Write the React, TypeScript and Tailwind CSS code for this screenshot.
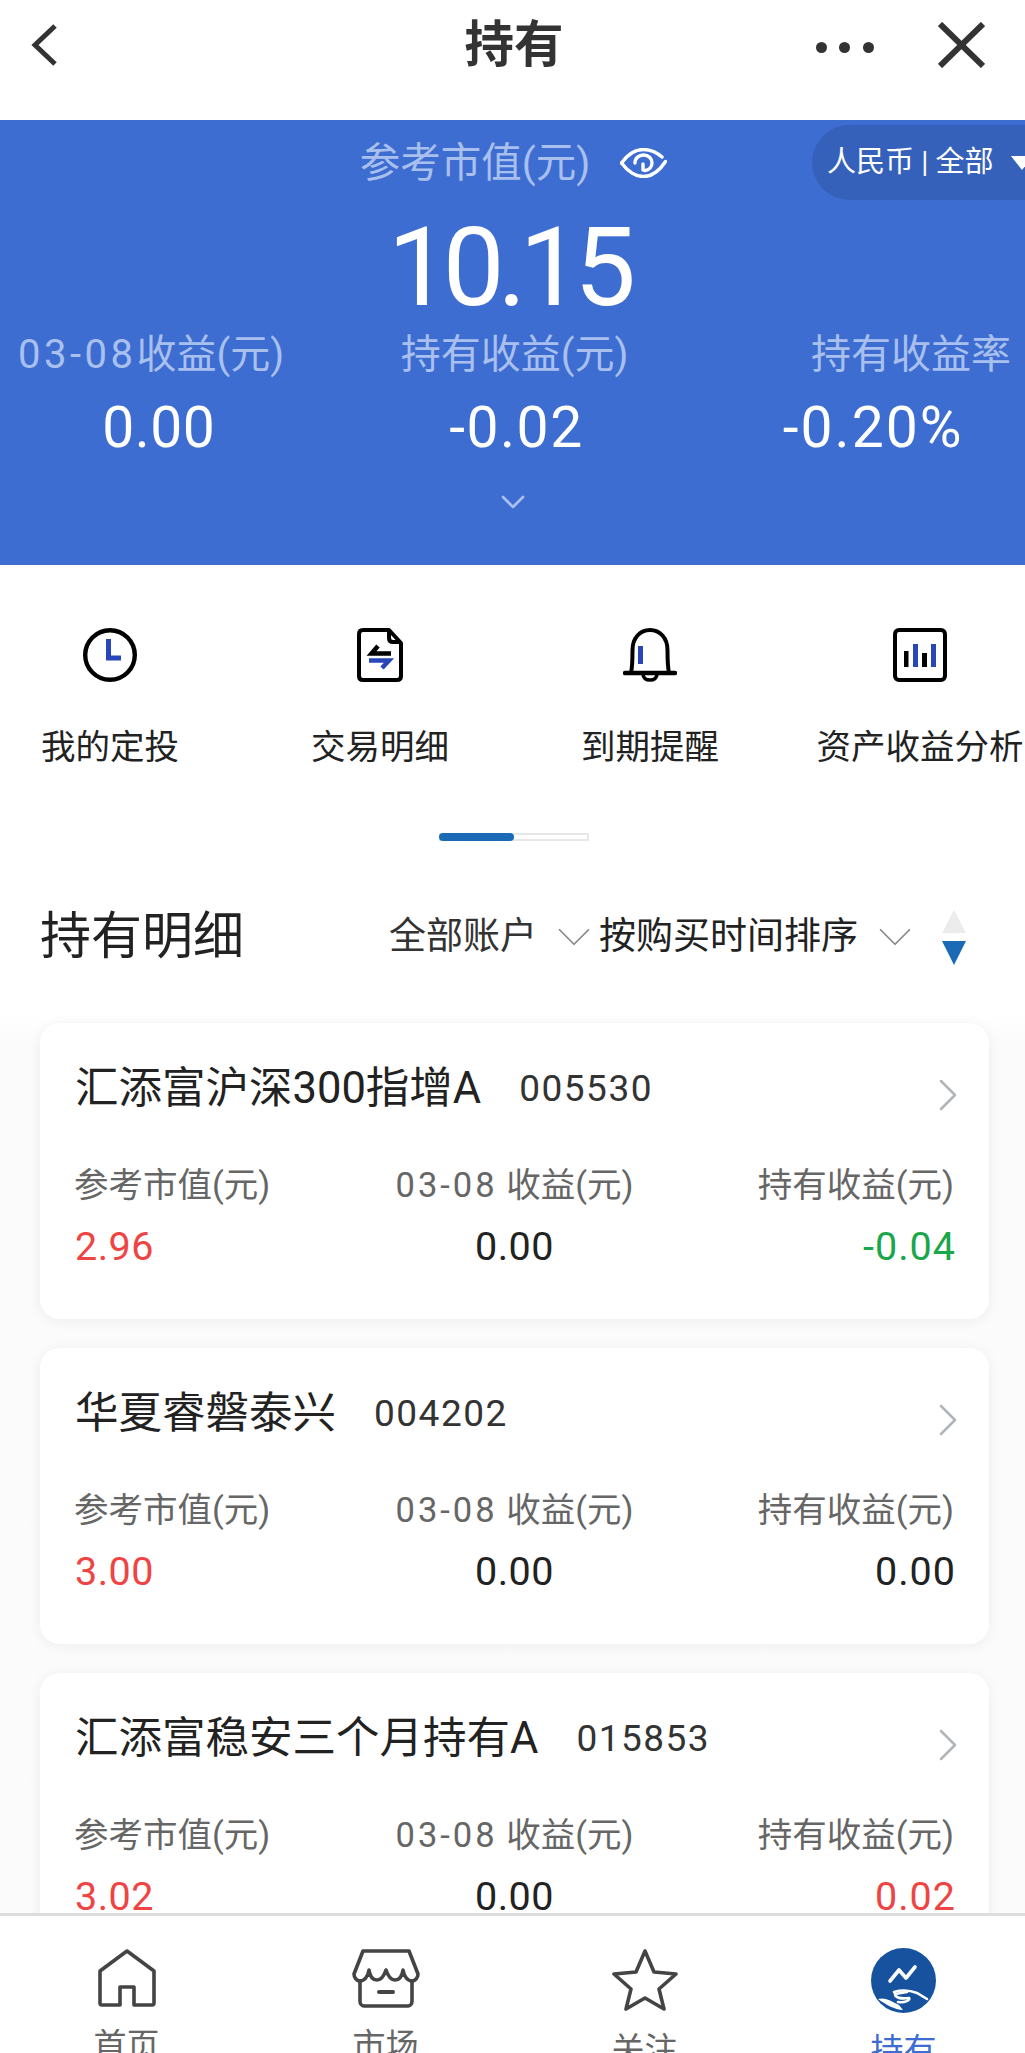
import { ChevronDown, ChevronRight } from "lucide-react";

interface Holding {
  name: string;
  code: string;
  value: string;
  today: string;
  total: string;
  totalColor: string;
}

const HOLDINGS: Holding[] = [
  { name: "汇添富沪深300指增A", code: "005530", value: "2.96", today: "0.00", total: "-0.04", totalColor: "text-[#1aa64a]" },
  { name: "华夏睿磐泰兴", code: "004202", value: "3.00", today: "0.00", total: "0.00", totalColor: "text-[#222222]" },
  { name: "汇添富稳安三个月持有A", code: "015853", value: "3.02", today: "0.00", total: "0.02", totalColor: "text-[#ef4444]" },
];

function EyeIcon() {
  return (
    <svg width="47" height="30" viewBox="0 0 47 30" fill="none" stroke="white" strokeWidth="3.4" strokeLinecap="round">
      <path d="M1.5 15C8 5.5 15 1.5 23.5 1.5C31 1.5 37 4.5 42 9" />
      <path d="M45.5 13.5C39 23.5 32 28.5 23.5 28.5C15 28.5 8 23.5 1.5 15" />
      <path d="M15 15C15 10 19 7 23.5 7C28.5 7 32 10.5 32 15C32 19 29 22 25 22.5" />
      <path d="M23 16V22" />
    </svg>
  );
}

function BackIcon() {
  return (
    <svg width="26" height="42" viewBox="0 0 26 42" fill="none" stroke="#333333" strokeWidth="5">
      <path d="M24 2L4 21L24 40" />
    </svg>
  );
}

function CloseIcon() {
  return (
    <svg width="47" height="46" viewBox="0 0 47 46" fill="none" stroke="#333333" strokeWidth="6">
      <path d="M2 2L45 44" />
      <path d="M45 2L2 44" />
    </svg>
  );
}

function ClockIcon() {
  return (
    <svg width="54" height="54" viewBox="0 0 54 54" fill="none">
      <circle cx="27" cy="27" r="24.8" stroke="black" strokeWidth="4.4" />
      <path d="M25.5 11V30H38" stroke="#2846b8" strokeWidth="5" />
    </svg>
  );
}

function FileIcon() {
  return (
    <svg width="46" height="54" viewBox="0 0 46 54" fill="none">
      <path d="M6 2H32L44 15V48C44 50.5 42.5 52 40 52H6C3.5 52 2 50.5 2 48V6C2 3.5 3.5 2 6 2Z" stroke="black" strokeWidth="4" strokeLinejoin="round" />
      <path d="M32 3V10C32 12.5 33.5 14 36 14H43" stroke="black" strokeWidth="4" />
      <path d="M21 18L14.5 25.5H34" stroke="black" strokeWidth="4.5" />
      <path d="M12 32.5H32L25 40" stroke="#2846b8" strokeWidth="4.5" />
    </svg>
  );
}

function BellIcon() {
  return (
    <svg width="54" height="54" viewBox="0 0 54 54" fill="none">
      <path d="M8 45C9.5 38 9.5 30 9.5 22C9.5 10 17 2 27 2C37 2 44.5 10 44.5 22C44.5 30 44.5 38 46 45" stroke="black" strokeWidth="4" />
      <path d="M2 45H52" stroke="black" strokeWidth="4.4" strokeLinecap="round" />
      <path d="M20 46C20 50 23 52 27 52C31 52 34 50 34 46" stroke="black" strokeWidth="3.6" />
      <rect x="15" y="18" width="5" height="18" fill="#2846b8" />
    </svg>
  );
}

function ChartIcon() {
  return (
    <svg width="54" height="54" viewBox="0 0 54 54" fill="none">
      <rect x="2" y="2" width="50" height="50" rx="4" stroke="black" strokeWidth="4" />
      <rect x="11" y="23" width="4.5" height="16" fill="black" />
      <rect x="20" y="16" width="5" height="23" fill="#2846b8" />
      <rect x="29" y="25" width="5" height="14" fill="black" />
      <rect x="38" y="16" width="5" height="23" fill="#2846b8" />
    </svg>
  );
}

function HomeIcon() {
  return (
    <svg width="60" height="60" viewBox="0 0 60 60" fill="none" stroke="#444444" strokeWidth="3.6" strokeLinejoin="round">
      <path d="M30 3L57 23V55C57 56.5 56 57 55 57H37V39H23V57H5C3.5 57 3 56 3 55V23L30 3Z" />
    </svg>
  );
}

function StoreIcon() {
  return (
    <svg width="68" height="60" viewBox="0 0 68 60" fill="none" stroke="#444444" strokeWidth="3.6" strokeLinejoin="round" strokeLinecap="round">
      <path d="M11 3H57L66 26C66 30 63 33 60 33C56 33 52 29 51 22C50 29 47 32 43 32C39 32 36 28 34 22C32 28 29 32 25 32C21 32 18 29 17 22C16 29 12 33 8 33C5 33 2 30 2 26L11 3Z" />
      <path d="M8 33V53C8 56 10 58 12 58H56C58 58 60 56 60 53V33" />
      <path d="M27 44H41" strokeWidth="4" />
    </svg>
  );
}

function StarIcon() {
  return (
    <svg width="66" height="64" viewBox="0 0 66 64" fill="none" stroke="#444444" strokeWidth="3.6" strokeLinejoin="round">
      <path d="M33 3L42 24L64 26L47 41L52 61L33 50L14 61L19 41L2 26L24 24L33 3Z" />
    </svg>
  );
}

function HoldIcon() {
  return (
    <svg width="65" height="65" viewBox="0 0 65 65" fill="none">
      <circle cx="32.5" cy="32.5" r="32.5" fill="#17529f" />
      <path d="M19 33L28 22L35 30L44 19" stroke="white" strokeWidth="3.6" strokeLinecap="round" strokeLinejoin="round" />
      <path d="M7 51C14 49 20 53 28 57L32 62C24 62 14 56 7 51Z" fill="white" />
      <path d="M23 44C30 42 38 42 46 45L56 51" stroke="white" strokeWidth="2.6" strokeLinecap="round" />
      <path d="M36 44L24 46C24 50 30 51 38 50C40 52 34 55 27 54" stroke="white" strokeWidth="2.6" strokeLinecap="round" />
    </svg>
  );
}

function Card({ item }: { item: Holding }) {
  return (
    <div className="h-[296px] shrink-0 rounded-[20px] bg-white pl-[35px] pr-[35px] pt-[36px] shadow-[0_2px_14px_rgba(0,0,0,0.06)]">
      <div className="flex h-[60px] items-center justify-between">
        <div className="flex items-center gap-[38px]">
          <span className="text-[43.5px] leading-[60px] text-[#222222]">{item.name}</span>
          <span className="text-[37px] leading-[60px] tracking-[1.5px] text-[#333333]">{item.code}</span>
        </div>
        <ChevronRight size={56} strokeWidth={1.1} className="-mr-[22px] mt-[12px] text-[#b0b5ba]" />
      </div>
      <div className="mt-[46px] grid grid-cols-3 text-[34.5px] leading-[40px] text-[#666666]">
        <span className="-ml-[1px]">参考市值(元)</span>
        <span className="text-center whitespace-nowrap">
          <span className="tracking-[3px]">03-08</span> 收益(元)
        </span>
        <span className="text-right">持有收益(元)</span>
      </div>
      <div className="mt-[18px] grid grid-cols-3 text-[39.5px] leading-[48px]">
        <span className="tracking-[0.5px] text-[#ef4444]">{item.value}</span>
        <span className="text-center tracking-[0.5px] text-[#222222]">{item.today}</span>
        <span className={`-mr-[2px] text-right tracking-[1px] ${item.totalColor}`}>{item.total}</span>
      </div>
    </div>
  );
}

export default function App() {
  const shortcuts = [
    { label: "我的定投", icon: <ClockIcon /> },
    { label: "交易明细", icon: <FileIcon /> },
    { label: "到期提醒", icon: <BellIcon /> },
    { label: "资产收益分析", icon: <ChartIcon /> },
  ];

  const tabs = [
    { label: "首页", icon: <HomeIcon />, color: "text-[#666666]" },
    { label: "市场", icon: <StoreIcon />, color: "text-[#666666]" },
    { label: "关注", icon: <StarIcon />, color: "text-[#666666]" },
    { label: "持有", icon: <HoldIcon />, color: "text-[#3d6dd1]" },
  ];

  return (
    <div className="flex h-[2053px] w-[1025px] flex-col overflow-hidden bg-white font-['Roboto','Noto_Sans_CJK_SC',sans-serif]">
      {/* top bar */}
      <div className="grid h-[120px] shrink-0 grid-cols-3 items-start">
        <div className="pl-[31px] pt-[24px]">
          <BackIcon />
        </div>
        <span className="pl-[3px] pt-[18px] text-center text-[49.5px] leading-[54px] font-bold text-[#333333]">持有</span>
        <div className="flex items-center justify-end gap-[64px] pr-[40px] pt-[22px]">
          <div className="mt-[4px] flex gap-[12.5px]">
            <span className="h-[11px] w-[11px] rounded-full bg-[#333333]" />
            <span className="h-[11px] w-[11px] rounded-full bg-[#333333]" />
            <span className="h-[11px] w-[11px] rounded-full bg-[#333333]" />
          </div>
          <CloseIcon />
        </div>
      </div>

      {/* summary */}
      <div className="relative h-[445px] shrink-0 bg-[#3d6dd1]">
        <div className="absolute right-0 top-[5px] flex h-[75px] w-[213px] items-center rounded-l-[38px] bg-[#3561bb] pl-[15px] text-[29px] text-white">
          <span className="whitespace-nowrap">人民币 | 全部</span>
          <span className="ml-[18px] h-0 w-0 shrink-0 border-x-[11px] border-t-[14px] border-x-transparent border-t-white" />
        </div>
        <div className="flex items-center justify-center gap-[30px] pl-[2px] pt-[18px]">
          <span className="text-[40.5px] leading-[50px] text-[#a9c0ee]">参考市值(元)</span>
          <EyeIcon />
        </div>
        <div className="mt-[25px] pr-[8px] text-center text-[110px] leading-[110px] font-normal tracking-[-7px] text-white">10.15</div>
        <div className="mt-[7px] flex justify-between pl-[18px] pr-[14px] text-[40px] leading-[50px] text-[#a9c0ee]">
          <span>
            <span className="tracking-[3.5px]">03-08</span>收益(元)
          </span>
          <span className="-translate-x-[33px]">持有收益(元)</span>
          <span>持有收益率</span>
        </div>
        <div className="mt-[18px] grid grid-cols-3 text-center text-[57px] leading-[60px] font-normal text-white">
          <span className="pr-[24px] tracking-[0.5px]">0.00</span>
          <span className="pl-[8px] tracking-[1.5px]">-0.02</span>
          <span className="pl-[38px] tracking-[2px]">-0.20%</span>
        </div>
        <div className="mt-[24px] flex justify-center">
          <ChevronDown size={40} strokeWidth={1.6} className="text-[#a9c0ee]" />
        </div>
      </div>

      {/* shortcuts */}
      <div className="-ml-[25px] flex shrink-0 pt-[63px]">
        {shortcuts.map((s) => (
          <div key={s.label} className="flex w-[270px] shrink-0 flex-col items-center">
            <div className="flex h-[54px] items-center justify-center">{s.icon}</div>
            <span className="mt-[43px] text-[34.5px] leading-[44px] text-[#222222]">{s.label}</span>
          </div>
        ))}
      </div>
      <div className="mt-[64px] flex shrink-0 justify-center pl-[2px]">
        <div className="h-[8px] w-[150px] border-y-2 border-r-2 border-[#e8e8e8] bg-white">
          <div className="-my-[2px] h-[8px] w-[75px] rounded-full bg-[#1a6ab5]" />
        </div>
      </div>

      {/* list header */}
      <div className="mt-[66px] flex h-[60px] shrink-0 items-center pl-[40px] pr-[59px]">
        <span className="text-[51px] leading-[60px] text-[#222222]">持有明细</span>
        <span className="ml-auto text-[37px] text-[#333333]">全部账户</span>
        <ChevronDown size={58} strokeWidth={0.7} className="ml-[8px] -mr-[4px] text-[#888888]" />
        <span className="text-[37px] text-[#222222]">按购买时间排序</span>
        <ChevronDown size={58} strokeWidth={0.7} className="ml-[8px] text-[#888888]" />
        <div className="ml-[18px] flex flex-col gap-[8px]">
          <span className="h-0 w-0 border-x-[12px] border-b-[23px] border-x-transparent border-b-[#ececec]" />
          <span className="h-0 w-0 border-x-[12px] border-t-[24px] border-x-transparent border-t-[#1a6ab5]" />
        </div>
      </div>

      {/* holdings */}
      <div className="mt-[48px] flex min-h-0 flex-1 flex-col gap-[29px] overflow-hidden bg-linear-to-b from-white to-[#fbfbfb] to-[30px] pl-[40px] pr-[36px] pt-[8px]">
        {HOLDINGS.map((item) => (
          <Card key={item.code} item={item} />
        ))}
      </div>

      {/* tab bar */}
      <div className="-ml-[3px] flex h-[140px] w-[1036px] shrink-0 border-t-[3px] border-[#dddddd] bg-white pt-[32px]">
        {tabs.map((t) => (
          <div key={t.label} className="flex w-[259px] flex-col items-center">
            <div className="flex h-[65px] items-center justify-center">{t.icon}</div>
            <span className={`mt-[18px] text-[33px] leading-[40px] ${t.color}`}>{t.label}</span>
          </div>
        ))}
      </div>
    </div>
  );
}
